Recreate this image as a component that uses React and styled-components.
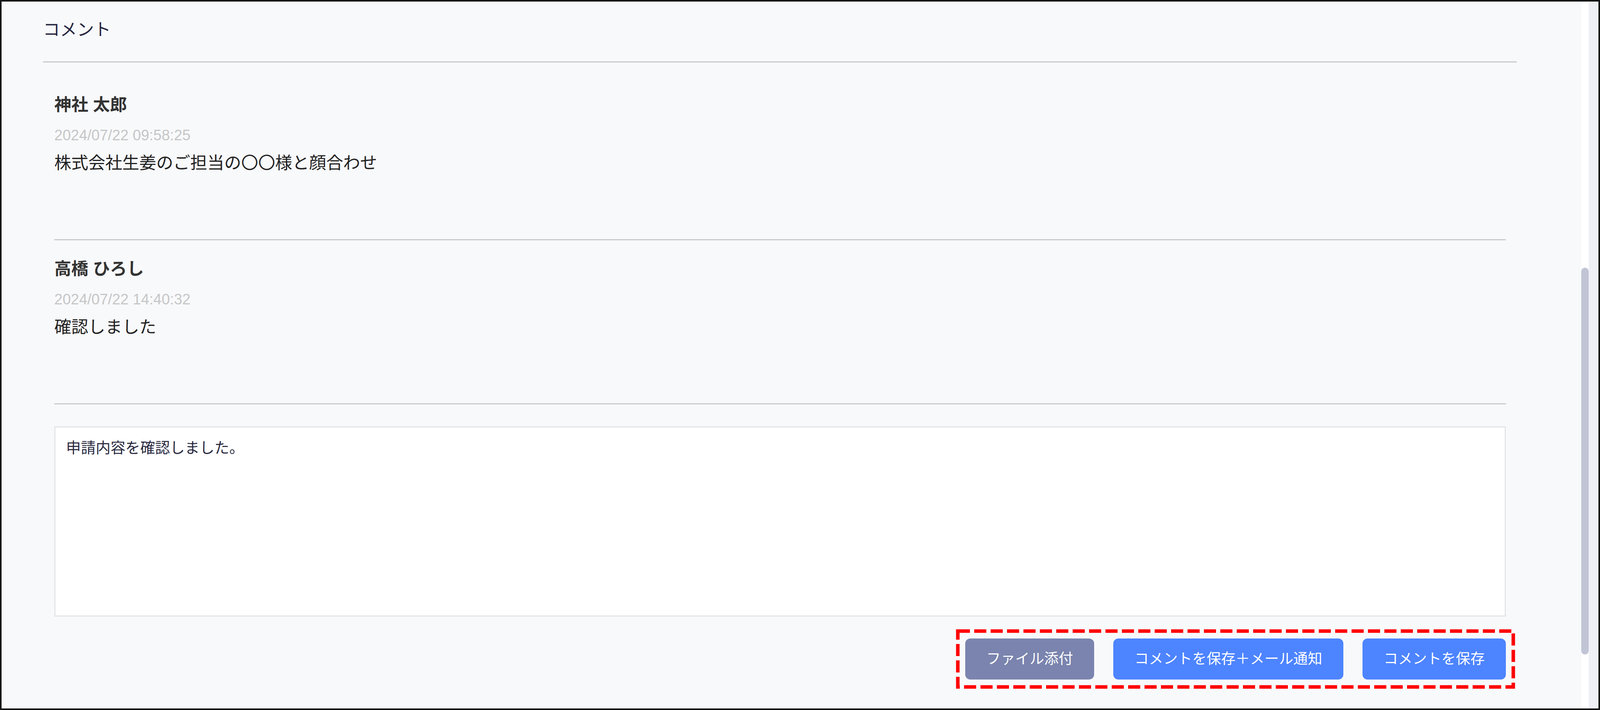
import styled, { createGlobalStyle } from "styled-components";

const FONT = `"Liberation Sans", "Noto Sans CJK JP", sans-serif`;

const comments = [
    { id: 1, author: "神社 太郎", stamp: "2024/07/22 09:58:25", text: "株式会社生姜のご担当の〇〇様と顔合わせ" },
    { id: 2, author: "高橋 ひろし", stamp: "2024/07/22 14:40:32", text: "確認しました" },
];

export default function App() {
    return (
        <>
            <GlobalStyle />
            <Frame>
                <Main>
                    <Header>
                        <Title>コメント</Title>
                    </Header>
                    <Body>
                        <CommentList>
                            {comments.map((c) => (
                                <CommentItem key={c.id}>
                                    <Author>{c.author}</Author>
                                    <Stamp>{c.stamp}</Stamp>
                                    <Text>{c.text}</Text>
                                </CommentItem>
                            ))}
                        </CommentList>

                        <Editor defaultValue="申請内容を確認しました。" />

                        <Actions>
                            <ButtonGroup>
                                {/* red dashed annotation around the buttons */}
                                <Marker>
                                    <rect x="0" y="0" width="100%" height="100%" />
                                </Marker>
                                <ActionButton $tone="muted">ファイル添付</ActionButton>
                                <ActionButton>コメントを保存＋メール通知</ActionButton>
                                <ActionButton>コメントを保存</ActionButton>
                            </ButtonGroup>
                        </Actions>
                    </Body>
                </Main>
                <ScrollLane>
                    <Thumb />
                </ScrollLane>
                <ScrollTrack />
            </Frame>
        </>
    );
}

const GlobalStyle = createGlobalStyle`
    html, body {
        margin: 0;
        padding: 0;
        background: #f8f9fb;
    }
    * {
        box-sizing: border-box;
    }
`;

const Frame = styled.div`
    display: flex;
    height: 100vh;
    border: 4px solid #161616;
    background: #f8f9fb;
    font-family: ${FONT};
    overflow: hidden;
`;

const Main = styled.div`
    flex: 1;
    min-width: 0;
    padding: 0 165px 0 106px;
`;

const Header = styled.div`
    padding: 40px 0 48px;
    border-bottom: 3px solid #cbcbcf;
`;

const Title = styled.h2`
    margin: 0;
    font-size: 43.5px;
    font-weight: 400;
    line-height: 65px;
    color: #262640;
`;

const Body = styled.div`
    padding: 0 28px 0 29px;
`;

const CommentList = styled.div`
    padding-top: 35px;
`;

const CommentItem = styled.div`
    padding: 41px 0 162px;
    border-bottom: 3px solid #cbcbcf;
`;

const Author = styled.div`
    font-size: 43.5px;
    font-weight: 700;
    line-height: 65px;
    color: #333333;
`;

const Stamp = styled.div`
    margin-top: 20px;
    font-size: 38px;
    line-height: 50px;
    color: #c6c6c6;
`;

const Text = styled.p`
    margin: 14px 0 0;
    font-size: 43.5px;
    line-height: 65px;
    color: #222222;
`;

const Editor = styled.textarea`
    display: block;
    width: 100%;
    height: 487px;
    margin-top: 56px;
    padding: 24px 27px;
    border: 3px solid #e4e5e9;
    border-radius: 0;
    background: #ffffff;
    font-family: ${FONT};
    font-size: 38px;
    line-height: 57px;
    color: #2a2a40;
    resize: none;
    outline: none;
`;

const Actions = styled.div`
    display: flex;
    justify-content: flex-end;
    margin-top: 56px;
`;

const ButtonGroup = styled.div`
    position: relative;
    display: flex;
    gap: 49px;
`;

const Marker = styled.svg`
    position: absolute;
    top: -19.5px;
    left: -19.5px;
    width: calc(100% + 38px);
    height: calc(100% + 38px);
    overflow: visible;
    pointer-events: none;

    rect {
        fill: none;
        stroke: #ff0000;
        stroke-width: 9px;
        stroke-dasharray: 31 11;
    }
`;

const ActionButton = styled.button`
    height: 105px;
    padding: 0 54px;
    border: none;
    border-radius: 13px;
    background: ${(p) => (p.$tone === "muted" ? "#7a84ae" : "#4d84ff")};
    color: #ffffff;
    font-family: ${FONT};
    font-size: 37px;
    line-height: 1;
    white-space: nowrap;
    cursor: pointer;
`;

const ScrollLane = styled.div`
    flex-shrink: 0;
    width: 19px;
    padding-top: 681px;
    background: #ffffff;
`;

const Thumb = styled.div`
    height: 990px;
    border-radius: 10px;
    background: #c1c4d5;
`;

const ScrollTrack = styled.div`
    flex-shrink: 0;
    width: 25px;
    background: #eff0f6;
`;
